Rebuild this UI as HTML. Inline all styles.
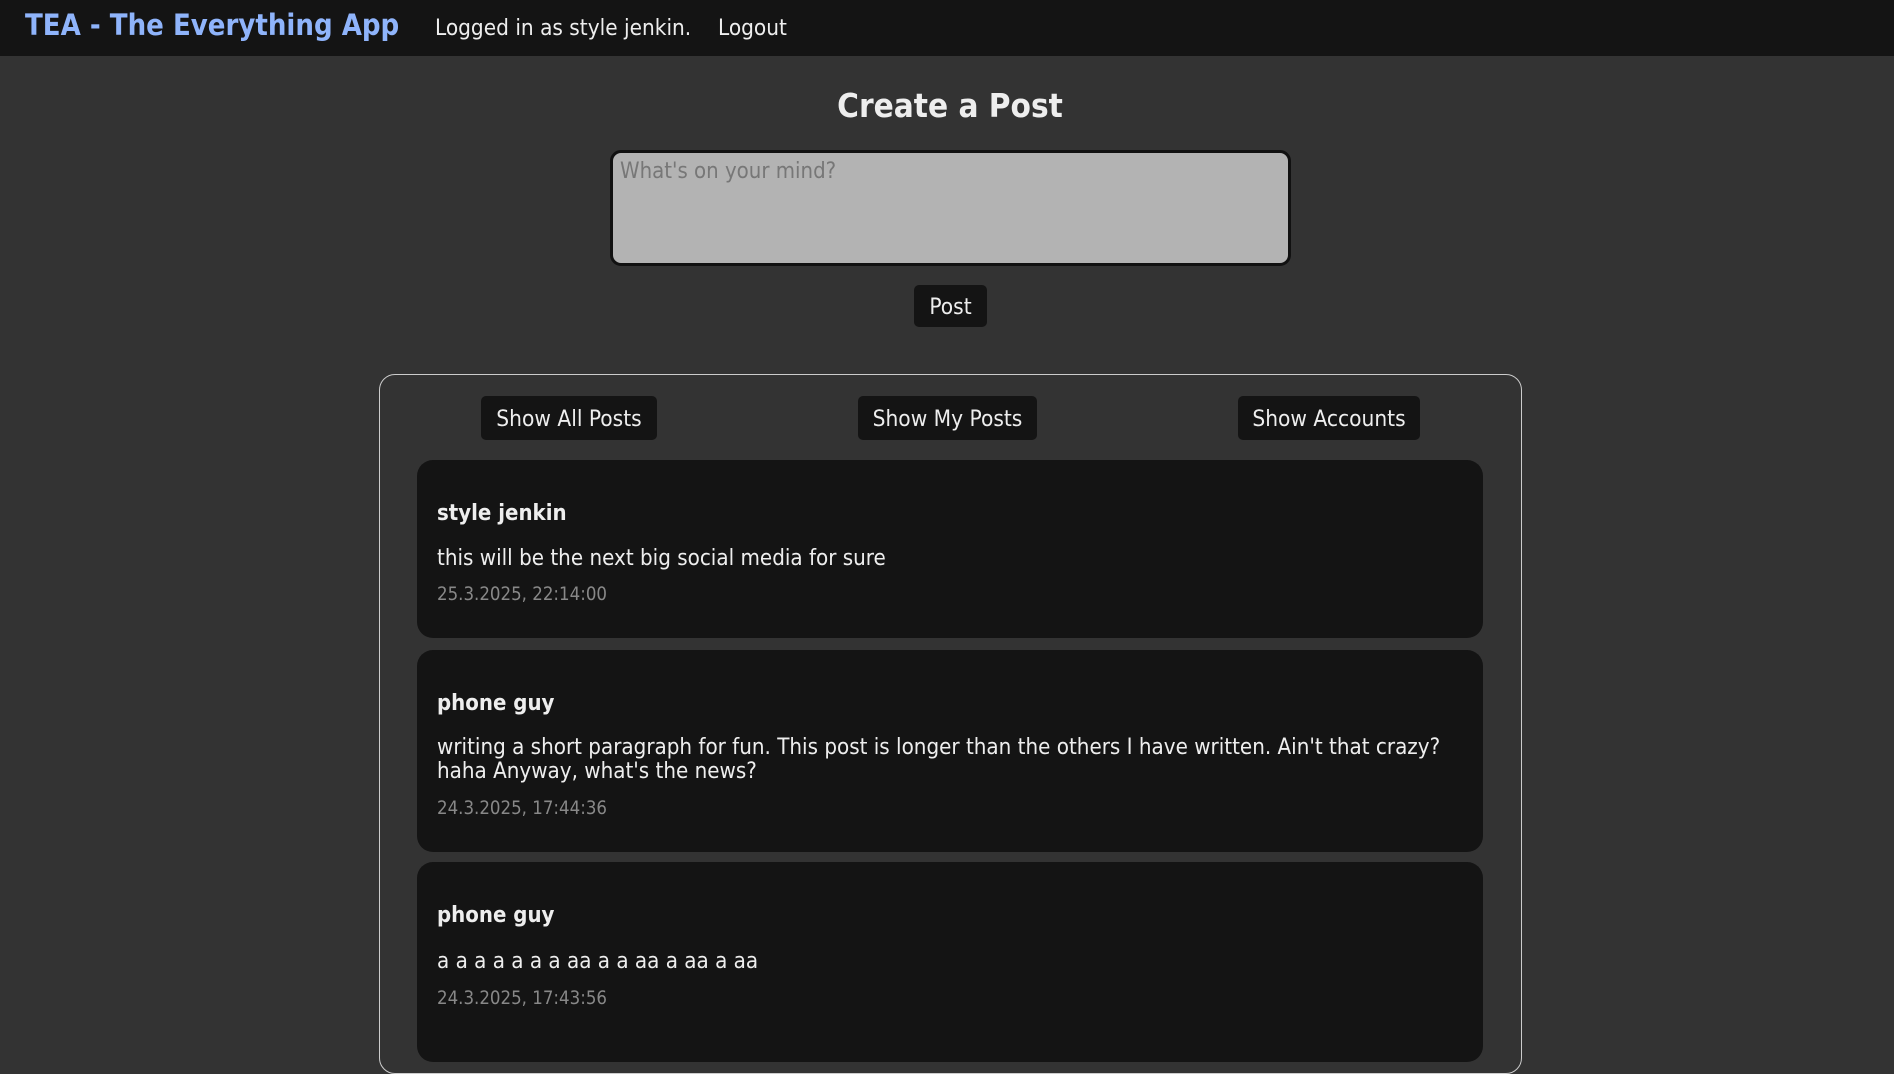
<!DOCTYPE html>
<html><head><meta charset="utf-8"><style>
*{box-sizing:border-box;margin:0;padding:0}
body{width:1894px;height:1018px;overflow:hidden;background:#333;font-family:"DejaVu Sans","Liberation Sans",sans-serif;font-stretch:condensed;color:#eee;position:relative}
.nav{position:absolute;left:0;top:0;width:1894px;height:56px;background:#141414}
.abs{position:absolute;white-space:nowrap}
.btn{position:absolute;background:#141414;border-radius:5px;color:#eee;font-size:22.5px;display:flex;align-items:center;justify-content:center;padding-top:2px}
.card{position:absolute;left:417px;width:1066px;background:#141414;border-radius:16px}
.card .n{position:absolute;left:20px;font-weight:bold;font-size:22px;line-height:24px}
.card .c{position:absolute;left:20px;right:20px;font-size:22.2px;line-height:24px;white-space:normal}
.card .d{position:absolute;left:20px;font-size:18.5px;line-height:20px;color:#888}
</style></head><body>
<div class="nav"></div>
<div class="abs" style="left:25px;top:7px;font-size:29px;line-height:36px;font-weight:bold;color:#8fb4fb">TEA - The Everything App</div>
<div class="abs" style="left:435px;top:14px;font-size:22.4px;line-height:28px">Logged in as style jenkin.</div>
<div class="abs" style="left:718px;top:14px;font-size:22.4px;line-height:28px">Logout</div>
<div class="abs" style="left:0;width:1900px;text-align:center;top:86px;font-size:33px;line-height:40px;font-weight:bold">Create a Post</div>
<div class="abs" style="left:610px;top:150px;width:681px;height:116px;background:#b3b3b3;border:3px solid #111;border-radius:11px;padding:6px 7px;font-size:22px;line-height:26px;color:#777">What's on your mind?</div>
<div class="btn" style="left:914px;top:285px;width:73px;height:42px">Post</div>
<div class="abs" style="left:379px;top:374px;width:1143px;height:700px;border:1.5px solid #ccc;border-radius:16px"></div>
<div class="btn" style="left:481px;top:396px;width:176px;height:44px">Show All Posts</div>
<div class="btn" style="left:858px;top:396px;width:179px;height:44px">Show My Posts</div>
<div class="btn" style="left:1238px;top:396px;width:182px;height:44px">Show Accounts</div>
<div class="card" style="top:460px;height:178px">
<div class="n" style="top:42px">style jenkin</div>
<div class="c" style="top:86px">this will be the next big social media for sure</div>
<div class="d" style="top:125px">25.3.2025, 22:14:00</div></div>
<div class="card" style="top:650px;height:202px">
<div class="n" style="top:42px">phone guy</div>
<div class="c" style="top:85px">writing a short paragraph for fun. This post is longer than the others I have written. Ain't that crazy?<br>haha Anyway, what's the news?</div>
<div class="d" style="top:149px">24.3.2025, 17:44:36</div></div>
<div class="card" style="top:862px;height:200px">
<div class="n" style="top:42px">phone guy</div>
<div class="c" style="top:87px">a a a a a a a aa a a aa a aa a aa</div>
<div class="d" style="top:127px">24.3.2025, 17:43:56</div></div>
</body></html>
